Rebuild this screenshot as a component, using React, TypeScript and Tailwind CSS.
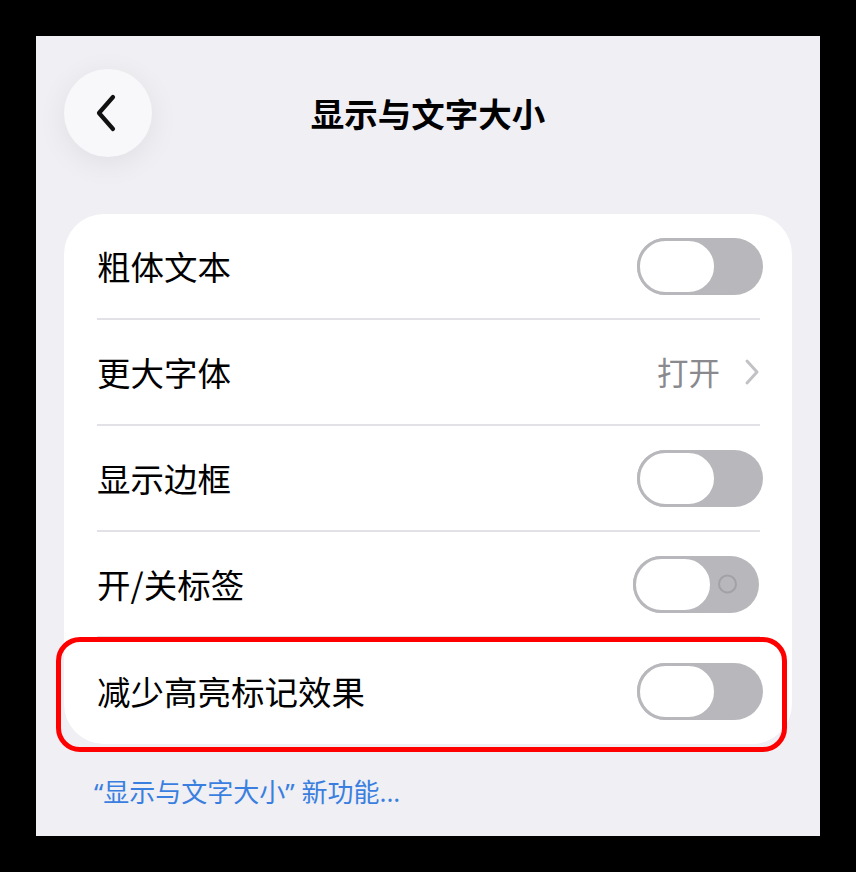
import React from "react";

const font = { fontFamily: '"Noto Sans CJK SC", "Noto Sans", sans-serif' };

type Row = {
  label: string;
  kind: "toggle" | "link";
  value?: string;
  onOffLabel?: boolean;
  highlight?: boolean;
};

const rows: Row[] = [
  { label: "粗体文本", kind: "toggle" },
  { label: "更大字体", kind: "link", value: "打开" },
  { label: "显示边框", kind: "toggle" },
  { label: "开/关标签", kind: "toggle", onOffLabel: true },
  { label: "减少高亮标记效果", kind: "toggle", highlight: true },
];

function Toggle({ onOffLabel }: { onOffLabel?: boolean }) {
  return (
    <div
      className={`relative w-[126px] h-[57px] rounded-full bg-[#b8b8bc] flex items-center ${
        onOffLabel ? "mr-[1px]" : "-mr-[3px]"
      }`}
    >
      <div className="w-[80px] h-[57px] rounded-full bg-white border-[3.5px] border-[#b8b8bc]" />
      {onOffLabel && (
        <div className="absolute right-[22px] top-1/2 -translate-y-1/2 w-[19px] h-[19px] rounded-full border-[2.5px] border-[#a2a2a6]" />
      )}
    </div>
  );
}

function Chevron({ className = "" }: { className?: string }) {
  return (
    <svg viewBox="0 0 16 30" className={className} fill="none">
      <path d="M3 4 L13 15 L3 26" stroke="currentColor" strokeWidth="3" strokeLinecap="round" strokeLinejoin="round" />
    </svg>
  );
}

export default function App() {
  return (
    <div className="w-[856px] h-[872px] bg-black p-[36px]" style={font}>
      <div className="w-[784px] h-[800px] bg-[#efeff4] px-[28px] pt-[33px]">
        {/* header */}
        <div className="grid grid-cols-[88px_1fr_88px] items-center">
          <button className="w-[88px] h-[88px] rounded-full bg-[#f8f8fb] shadow-[0_6px_30px_rgba(0,0,0,0.07)] flex items-center justify-center">
            <svg viewBox="0 0 24 40" className="w-[24px] h-[40px] -ml-[4px]" fill="none">
              <path d="M19 4 L5 20 L19 36" stroke="#111" strokeWidth="4.2" strokeLinecap="round" strokeLinejoin="round" />
            </svg>
          </button>
          <h1 className="text-center text-[33.5px] font-semibold text-black leading-none">显示与文字大小</h1>
          <div />
        </div>

        {/* settings card */}
        <div className="mt-[57px] bg-white rounded-[40px]">
          {rows.map((row, i) => (
            <div key={row.label} className="relative h-[106px] pl-[33px] pr-[32px]">
              <div
                className={`h-full flex items-center justify-between ${
                  i < rows.length - 1 ? "border-b-2 border-[#e2e2e6]" : ""
                }`}
              >
                <span className="text-[33.5px] text-black leading-none">{row.label}</span>
                {row.kind === "toggle" ? (
                  <Toggle onOffLabel={row.onOffLabel} />
                ) : (
                  <div className="flex items-center gap-[24px] text-[#8a8a8e]">
                    <span className="text-[31.5px] leading-none">{row.value}</span>
                    <Chevron className="w-[16px] h-[30px] text-[#c2c2c6]" />
                  </div>
                )}
              </div>
              {row.highlight && (
                <div className="absolute -left-[8px] right-[5px] -top-[1px] -bottom-[8px] rounded-[24px] border-[5px] border-[#ff0000] pointer-events-none" />
              )}
            </div>
          ))}
        </div>

        <p
          className="mt-[35px] pl-[30px] text-[26px] text-[#3a7fe0] leading-none"
          style={{ fontFamily: '"Noto Sans", "Noto Sans CJK SC", sans-serif' }}
        >
          “显示与文字大小” 新功能...
        </p>
      </div>
    </div>
  );
}
